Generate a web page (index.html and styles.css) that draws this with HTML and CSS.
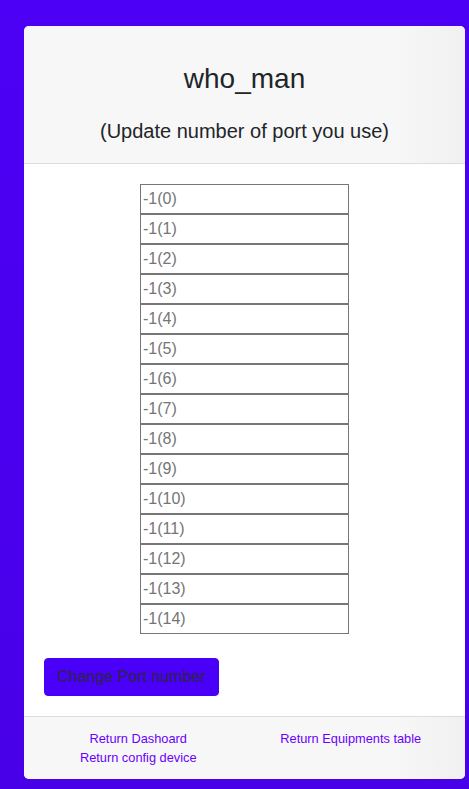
FILE: index.html
```html
<!DOCTYPE html>
<html>
<head>
<meta charset="utf-8">
<link rel="stylesheet" href="styles.css">
</head>
<body>
<div class="card">
  <div class="card-header">
    <h2 class="title">who_man</h2>
    <p class="subtitle">(Update number of port you use)</p>
  </div>
  <div class="card-body">
    <form class="ports">
      <input class="port" type="text" placeholder="-1(0)">
      <input class="port" type="text" placeholder="-1(1)">
      <input class="port" type="text" placeholder="-1(2)">
      <input class="port" type="text" placeholder="-1(3)">
      <input class="port" type="text" placeholder="-1(4)">
      <input class="port" type="text" placeholder="-1(5)">
      <input class="port" type="text" placeholder="-1(6)">
      <input class="port" type="text" placeholder="-1(7)">
      <input class="port" type="text" placeholder="-1(8)">
      <input class="port" type="text" placeholder="-1(9)">
      <input class="port" type="text" placeholder="-1(10)">
      <input class="port" type="text" placeholder="-1(11)">
      <input class="port" type="text" placeholder="-1(12)">
      <input class="port" type="text" placeholder="-1(13)">
      <input class="port" type="text" placeholder="-1(14)">
    </form>
    <button class="btn" type="button">Change Port number</button>
  </div>
  <div class="card-footer">
    <div class="col">
      <a class="link" href="#">Return Dashoard</a>
      <a class="link" href="#">Return config device</a>
    </div>
    <div class="col">
      <a class="link" href="#">Return Equipments table</a>
    </div>
  </div>
</div>
</body>
</html>
```
FILE: styles.css
```css
html, body {
  margin: 0;
  padding: 0;
}
body {
  min-height: 789px;
  background: linear-gradient(180deg, #4c00f5 0%, #4800e8 100%);
  font-family: "Liberation Sans", Arial, sans-serif;
  color: #212529;
  padding: 26px 4px 11px 24px;
  box-sizing: border-box;
}
.card {
  width: 441px;
  background: #ffffff;
  border-radius: 5px;
  overflow: hidden;
  display: flex;
  flex-direction: column;
}
.card-header {
  background: linear-gradient(90deg, #f7f7f7 0%, #f7f7f7 85%, #f0f0f0 100%);
  border-bottom: 1px solid #dcdcdc;
  padding: 36px 0 20px;
  text-align: center;
}
.title {
  margin: 0;
  font-size: 28px;
  font-weight: 400;
  line-height: 34px;
  color: #212529;
}
.subtitle {
  margin: 23px 0 0;
  font-size: 20px;
  line-height: 24px;
}
.card-body {
  padding: 20px;
  display: flex;
  flex-direction: column;
}
.ports {
  display: flex;
  flex-direction: column;
  align-items: center;
}
.port {
  box-sizing: border-box;
  width: 209px;
  height: 30px;
  margin: 0;
  padding: 1px 2px;
  border: 1px solid #767676;
  font-family: "Liberation Sans", Arial, sans-serif;
  font-size: 16px;
  color: #212529;
  background: #fff;
}
.port::placeholder {
  color: #757575;
}
.btn {
  align-self: flex-start;
  margin-top: 24px;
  height: 38px;
  padding: 6px 12px;
  border: 1px solid #4a00f8;
  border-radius: 4px;
  background: #4a00f8;
  color: #2a2540;
  font-family: "Liberation Sans", Arial, sans-serif;
  font-size: 16px;
  line-height: 24px;
}
.card-footer {
  background: linear-gradient(90deg, #f7f7f7 0%, #f7f7f7 85%, #f0f0f0 100%);
  border-top: 1px solid #dcdcdc;
  padding: 12px 8px 12px;
  display: grid;
  grid-template-columns: 1fr 1fr;
}
.col {
  display: flex;
  flex-direction: column;
  align-items: center;
}
.link {
  font-size: 12.8px;
  line-height: 19px;
  color: #6a00ff;
  text-decoration: none;
}
```
